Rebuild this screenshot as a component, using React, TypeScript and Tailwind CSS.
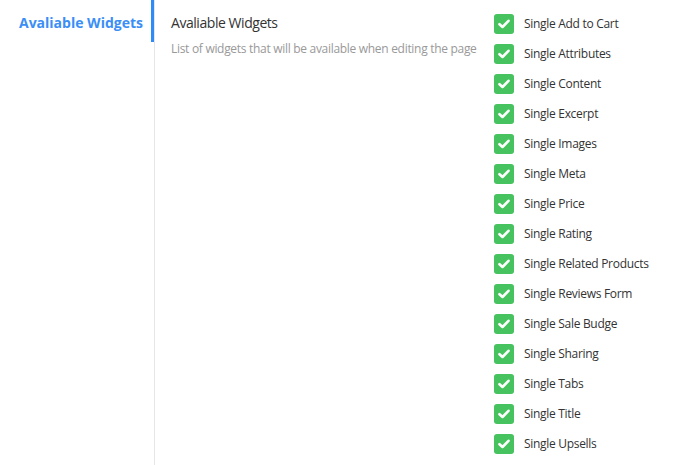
import React from "react";

const items = [
  "Single Add to Cart",
  "Single Attributes",
  "Single Content",
  "Single Excerpt",
  "Single Images",
  "Single Meta",
  "Single Price",
  "Single Rating",
  "Single Related Products",
  "Single Reviews Form",
  "Single Sale Budge",
  "Single Sharing",
  "Single Tabs",
  "Single Title",
  "Single Upsells",
];

function Check() {
  return (
    <span className="w-[20px] h-[20px] rounded-[3px] bg-[#46c35f] flex items-center justify-center shrink-0">
      <svg width="12" height="10" viewBox="0 0 12 10" fill="none">
        <path d="M1.5 5.2 L4.5 8 L10.5 1.8" stroke="white" strokeWidth="2.6" strokeLinecap="round" strokeLinejoin="round" />
      </svg>
    </span>
  );
}

export default function App() {
  return (
    <div className="flex w-[679px] h-[465px] bg-white overflow-hidden" style={{ fontFamily: '"Open Sans", "Noto Sans", sans-serif' }}>
      <div className="w-[154px] shrink-0">
        <div className="h-[42px] border-r-[3px] border-[#2f8cf6] flex items-start justify-end pr-[8px] pt-[11px]">
          <span className="text-[14px] font-bold text-[#3a8ef6] leading-[24px]">Avaliable Widgets</span>
        </div>
      </div>
      <div className="w-px bg-[#e6e6e6] shrink-0" />
      <div className="flex pl-[16px]">
        <div className="w-[323px] shrink-0 pt-[13px]">
          <div className="text-[14px] text-[#333] leading-[20px] tracking-[-0.45px]">Avaliable Widgets</div>
          <div className="text-[12px] text-[#999] leading-[18px] mt-[7px] whitespace-nowrap tracking-[-0.3px]">List of widgets that will be available when editing the page</div>
        </div>
        <div className="flex flex-col pt-[9px]">
          {items.map((t) => (
            <div key={t} className="flex items-center h-[30px]">
              <Check />
              <span className="ml-[10px] text-[12px] text-[#333] leading-[20px] tracking-[-0.3px]">{t}</span>
            </div>
          ))}
        </div>
      </div>
    </div>
  );
}
